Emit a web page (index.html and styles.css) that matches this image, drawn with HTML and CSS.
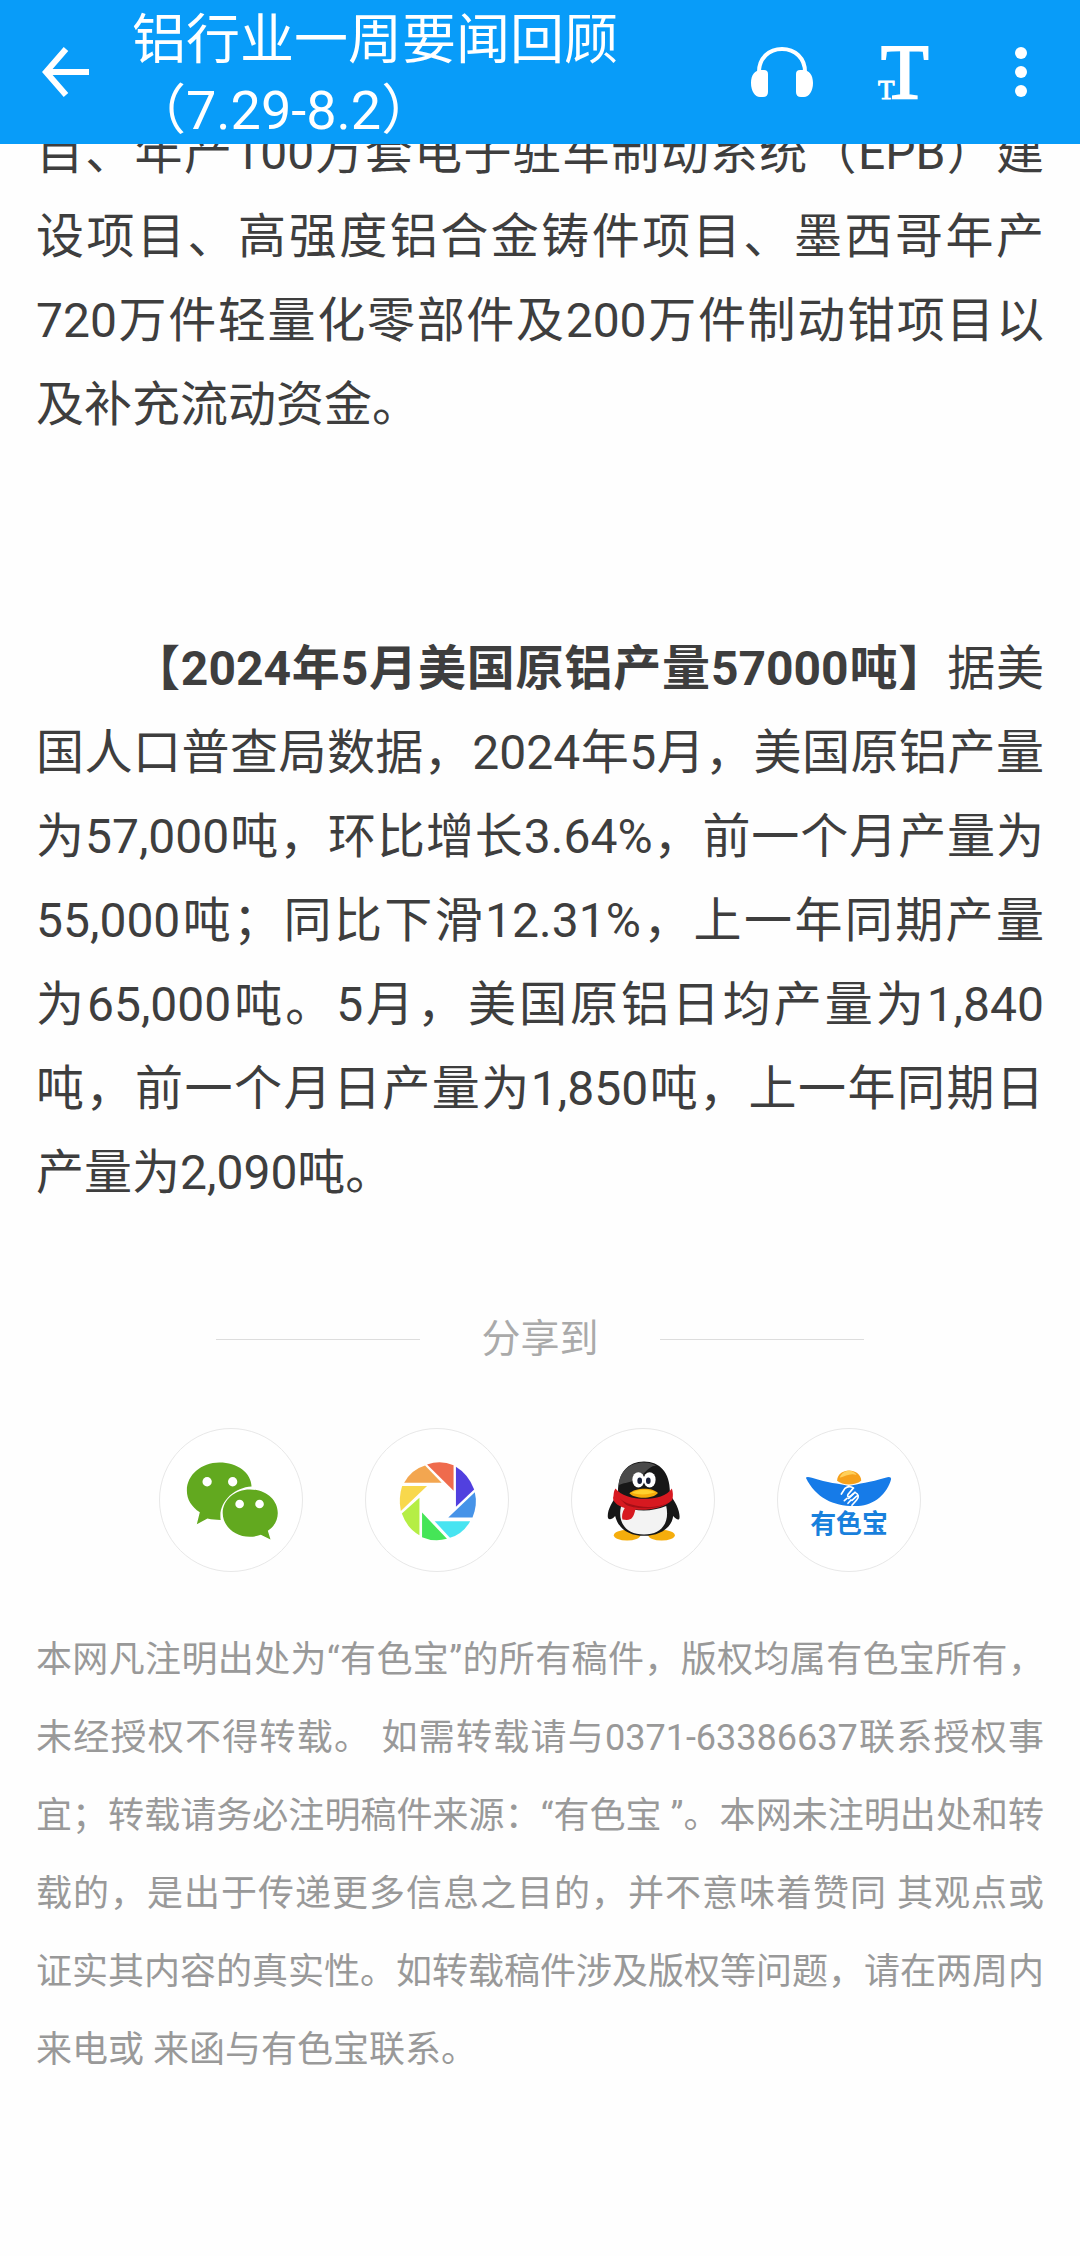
FILE: index.html
```html
<!DOCTYPE html>
<html lang="zh-CN">
<head>
<meta charset="utf-8">
<meta name="viewport" content="width=device-width, initial-scale=1">
<title>铝行业一周要闻回顾（7.29-8.2）</title>
<link rel="stylesheet" href="styles.css">
</head>
<body>
<header class="bar">
  <button class="bar-btn back" type="button" aria-label="返回">
    <svg width="48" height="50" viewBox="0 0 48 50" fill="none" stroke="#fff" stroke-width="6"><path d="M24 2 4 25l20 23M4 25h43"/></svg>
  </button>
  <h1 class="bar-title">铝行业一周要闻回顾（7.29-8.2）</h1>
  <div class="bar-actions">
    <button class="bar-btn" type="button" aria-label="收听">
      <svg width="64" height="52" viewBox="0 0 64 52" fill="#fff"><path d="M9 26C9 12 19 3 32 3s23 9 23 23" fill="none" stroke="#fff" stroke-width="4"/><path d="M11 24h3q4 0 4 4v18q0 5-5 5h-3C5 51 1 45 1 37s4-13 10-13zM53 24h-3q-4 0-4 4v18q0 5 5 5h3c5 0 9-6 9-14s-4-13-10-13z"/></svg>
    </button>
    <button class="bar-btn" type="button" aria-label="字号">
      <svg class="type-icon" width="72" height="56" viewBox="0 0 72 56" fill="#fff" stroke="#fff"><text x="3" y="54" font-size="78" stroke-width="2">T</text><text x="0" y="55" font-size="27" stroke-width="1">T</text></svg>
    </button>
    <button class="bar-btn" type="button" aria-label="更多">
      <svg width="14" height="52" viewBox="0 0 14 52" fill="#fff"><circle cx="7" cy="7" r="6"/><circle cx="7" cy="26" r="6"/><circle cx="7" cy="45" r="6"/></svg>
    </button>
  </div>
</header>
<main class="page">
  <article class="article">
    <p>目、年产100万套电子驻车制动系统（EPB）建设项目、高强度铝合金铸件项目、墨西哥年产720万件轻量化零部件及200万件制动钳项目以及补充流动资金。</p>
    <p class="lead"><strong>【2024年5月美国原铝产量57000吨】</strong>据美国人口普查局数据，2024年5月，美国原铝产量为57,000吨，环比增长3.64%，前一个月产量为55,000吨；同比下滑12.31%，上一年同期产量为65,000吨。5月，美国原铝日均产量为1,840吨，前一个月日产量为1,850吨，上一年同期日产量为2,090吨。</p>
  </article>
  <section class="share">
    <h2 class="share-title">分享到</h2>
    <div class="share-list">
      <button class="share-btn" type="button" aria-label="微信">
        <svg viewBox="31 40 428 428"><g fill="#62a91f"><path d="M210 141c54 0 96 31 97 72-49 2-94 42-94 88 0 6 0 8 1 13-16 0-25-1-40-4l-32 17 9-36c-25-17-39-39-39-66 0-46 43-84 98-84z"/><path d="M302 222c47 0 84 31 84 71 0 22-11 41-30 54l8 26-29-14c-11 4-22 6-33 6-45 0-82-32-82-72s37-71 82-71z"/></g><g fill="#fff"><circle cx="173" cy="199" r="14"/><circle cx="250" cy="199" r="14"/><circle cx="271" cy="266" r="13"/><circle cx="331" cy="266" r="13"/></g></svg>
      </button>
      <button class="share-btn" type="button" aria-label="朋友圈">
        <svg viewBox="33 40 428 428"><path fill="#ef6b4d" d="M217 147Q257 132 297 149V226z"/><path fill="#f3a650" d="M148 202Q170 162 211 150L261 202z"/><path fill="#f8d84c" d="M142 212H217L138 287Q130 248 142 212z"/><path fill="#b5ee45" d="M141 295 194 247V360Q157 340 141 295z"/><path fill="#45e557" d="M202 292 277 371Q239 382 202 366z"/><path fill="#48e4f1" d="M240 318H347Q325 357 286 368z"/><path fill="#4693e8" d="M281 307 361 231Q370 269 354 307z"/><path fill="#5140df" d="M304 154Q341 176 359 222L304 274z"/></svg>
      </button>
      <button class="share-btn" type="button" aria-label="QQ">
        <svg viewBox="35 40 428 428"><g fill="#f5ad0c"><ellipse cx="201" cy="360" rx="40" ry="16"/><ellipse cx="305" cy="360" rx="40" ry="16"/></g><path fill="#171717" d="M174 238C171 175 202 138 252 138s81 37 78 100c17 22 31 48 29 70-1 8-10 5-19-6-5 39-44 60-88 60s-77-20-87-60c-10 12-21 13-22 4-2-20 12-47 29-68z"/><path fill="#4a4a4a" d="M176 210C177 169 208 141 251 141q22 0 38 10c-25-3-38 37-75 47-16 5-31 6-38 12z"/><path fill="#f3f3f3" d="M183 272q69 27 136 0c11 49-13 86-67 86-55 0-81-37-69-86z"/><g fill="#fff"><ellipse cx="235" cy="193" rx="18" ry="23"/><ellipse cx="269" cy="193" rx="18" ry="23"/></g><ellipse cx="239" cy="196" rx="7" ry="10" fill="#161d38"/><ellipse cx="265" cy="196" rx="7" ry="10" fill="#161d38"/><path fill="#f6aa0b" d="M208 234c17-18 70-19 86-1-13 18-70 20-86 1z"/><path fill="#ffd12d" d="M215 232c20-11 50-13 72-1-20 7-51 9-72 1z"/><path fill="#d71920" d="M166 219c28 39 140 45 170 0q6 18 1 35c-25 25-70 32-111 29-7 29-13 34-39 30q-4-17 7-35c-24-6-40-23-34-36 1-10 1-16 6-23z"/><path fill="#a40f16" d="M178 249c30 28 109 36 150 11-31 25-109 23-132 7z"/></svg>
      </button>
      <button class="share-btn" type="button" aria-label="有色宝">
        <svg class="ysb" viewBox="36 40 428 428"><path fill="#f6a11c" d="M214 196c2-41 70-41 73 0-21 16-57 14-73 0z"/><path fill="#ffd05b" d="M222 187c9-28 43-26 51-8-17-8-34 3-51 8z"/><path fill="#167be8" d="M120 187q3-5 18 0c51 17 77 16 111 25 30-7 65-11 111-25q17-6 17 4c-11 43-51 80-99 81-65 4-126-19-158-85z"/><g fill="none" stroke="#fff" stroke-width="5" stroke-linecap="round"><path d="M227 236 238 219Q250 209 263 218L247 237Q243 247 254 243L268 231"/><path d="M236 256 244 249M247 264 256 254M259 270 273 254Q285 240 268 231M249 249 264 235M259 255 273 242"/></g><text x="250" y="354" text-anchor="middle" font-size="78" fill="#1880dc">有色宝</text></svg>
      </button>
    </div>
  </section>
  <p class="notice">本网凡注明出处为“有色宝”的所有稿件，版权均属有色宝所有，未经授权不得转载。 如需转载请与0371-63386637联系授权事宜；转载请务必注明稿件来源：“有色宝 ”。本网未注明出处和转载的，是出于传递更多信息之目的，并不意味着赞同 其观点或证实其内容的真实性。如转载稿件涉及版权等问题，请在两周内来电或 来函与有色宝联系。</p>
</main>
</body>
</html>
```
FILE: styles.css
```css
* { box-sizing: border-box; }

body {
  margin: 0;
  background: #fefefe;
  color: #3e3e3e;
  font-family: Roboto, "Noto Sans CJK SC", sans-serif;
}

button {
  padding: 0;
  border: 0;
  background: none;
  cursor: pointer;
}

svg { display: block; }

.bar {
  position: sticky;
  top: 0;
  z-index: 1;
  display: flex;
  align-items: center;
  height: 144px;
  padding: 0 52px 0 42px;
  background: #089cf9;
  color: #fff;
}

.bar-btn { flex: none; }

.bar-title {
  flex: 1;
  max-width: 500px;
  margin: 0 0 0 42px;
  padding-top: 8px;
  font-size: 54px;
  font-weight: 400;
  line-height: 70px;
}

.bar-actions {
  display: flex;
  align-items: center;
  gap: 64px;
  margin-left: auto;
}

.type-icon {
  font-family: "Liberation Serif", serif;
  overflow: visible;
}

.page { padding: 0 36px 144px; }

/* The article is scrolled part of a line under the bar. */
.article {
  margin-top: -33px;
  font-size: 48px;
  line-height: 84px;
  text-align: justify;
}

.article p { margin: 0; }

.article .lead {
  margin-top: 180px;
  text-indent: 2em;
}

.share { margin-top: 96px; }

.share-title {
  display: flex;
  align-items: center;
  justify-content: space-between;
  width: 648px;
  max-width: 100%;
  margin: 0 auto;
  color: #aaa;
  font-size: 39px;
  font-weight: 400;
  line-height: 56px;
}

.share-title::before,
.share-title::after {
  content: "";
  width: 204px;
  height: 1px;
  background: #ddd;
}

.share-list {
  display: flex;
  justify-content: center;
  gap: 62px;
  margin-top: 61px;
}

.share-btn {
  width: 144px;
  height: 144px;
  border: 1px solid #e8e8e8;
  border-radius: 50%;
  background: #fff;
}

.ysb {
  font-family: "Noto Sans CJK SC", sans-serif;
  font-weight: 700;
}

.notice {
  margin: 49px 0 0;
  color: #999;
  font-size: 36px;
  line-height: 78px;
  text-align: justify;
}
```
